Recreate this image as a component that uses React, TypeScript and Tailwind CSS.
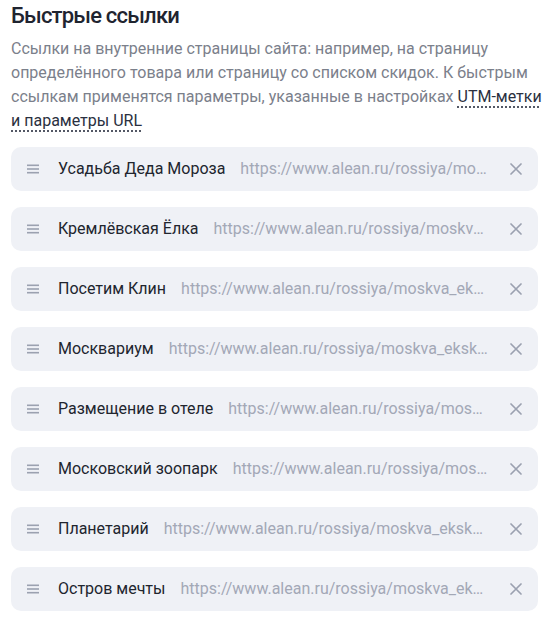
import React from "react";

const items: { title: string; url: string }[] = [
  { title: "Усадьба Деда Мороза", url: "https://www.alean.ru/rossiya/moskva_ekskursii/usadba" },
  { title: "Кремлёвская Ёлка", url: "https://www.alean.ru/rossiya/moskva_ekskursii/elka" },
  { title: "Посетим Клин", url: "https://www.alean.ru/rossiya/moskva_ekskursii/klin" },
  { title: "Москвариум", url: "https://www.alean.ru/rossiya/moskva_ekskursii/moskvarium" },
  { title: "Размещение в отеле", url: "https://www.alean.ru/rossiya/moskva_ekskursii/hotel" },
  { title: "Московский зоопарк", url: "https://www.alean.ru/rossiya/moskva_ekskursii/zoo" },
  { title: "Планетарий", url: "https://www.alean.ru/rossiya/moskva_ekskursii/planetarium" },
  { title: "Остров мечты", url: "https://www.alean.ru/rossiya/moskva_ekskursii/ostrov" },
];

function Burger() {
  return (
    <svg width="12" height="10" viewBox="0 0 12 10" className="shrink-0">
      <rect x="0" y="0.5" width="12" height="1.6" fill="#9ba1b0" />
      <rect x="0" y="4.2" width="12" height="1.6" fill="#9ba1b0" />
      <rect x="0" y="7.9" width="12" height="1.6" fill="#9ba1b0" />
    </svg>
  );
}

function Cross() {
  return (
    <svg width="12" height="12" viewBox="0 0 12 12" className="shrink-0">
      <path d="M1 1 L11 11 M11 1 L1 11" stroke="#9ba1b0" strokeWidth="1.7" strokeLinecap="round" />
    </svg>
  );
}

export default function App() {
  return (
    <div className="w-[555px] h-[628px] bg-white px-[11px] pt-0" style={{ fontFamily: "Roboto, 'Noto Sans', sans-serif" }}>
      <h1 className="text-[22px] leading-[32px] font-medium text-[#1f2430] tracking-[-0.8px]">Быстрые ссылки</h1>
      <p className="mt-[5px] text-[16px] leading-[24px] text-[#7b808b]">
        Ссылки на внутренние страницы сайта: например, на страницу определённого товара или страницу со списком скидок. К быстрым ссылкам применятся параметры, указанные в настройках{" "}
        <span className="text-[#2a3040] underline decoration-dotted decoration-[#2a3040] underline-offset-[5px]">
          <span className="whitespace-nowrap">UTM-метки</span> и параметры URL
        </span>
      </p>
      <div className="mt-[14px] flex flex-col gap-[16px] w-[527px]">
        {items.map((it) => (
          <div key={it.title} className="flex items-center h-[44px] rounded-[10px] bg-[#eff1f6] pl-[16px] pr-[16px]">
            <Burger />
            <span className="ml-[19px] text-[16px] text-[#21252e] whitespace-nowrap shrink-0">{it.title}</span>
            <span className="ml-[15px] flex-1 min-w-0 text-[16px] text-[#a3a8b6] whitespace-nowrap overflow-hidden text-ellipsis">{it.url}</span>
            <span className="ml-[20px]"><Cross /></span>
          </div>
        ))}
      </div>
    </div>
  );
}
